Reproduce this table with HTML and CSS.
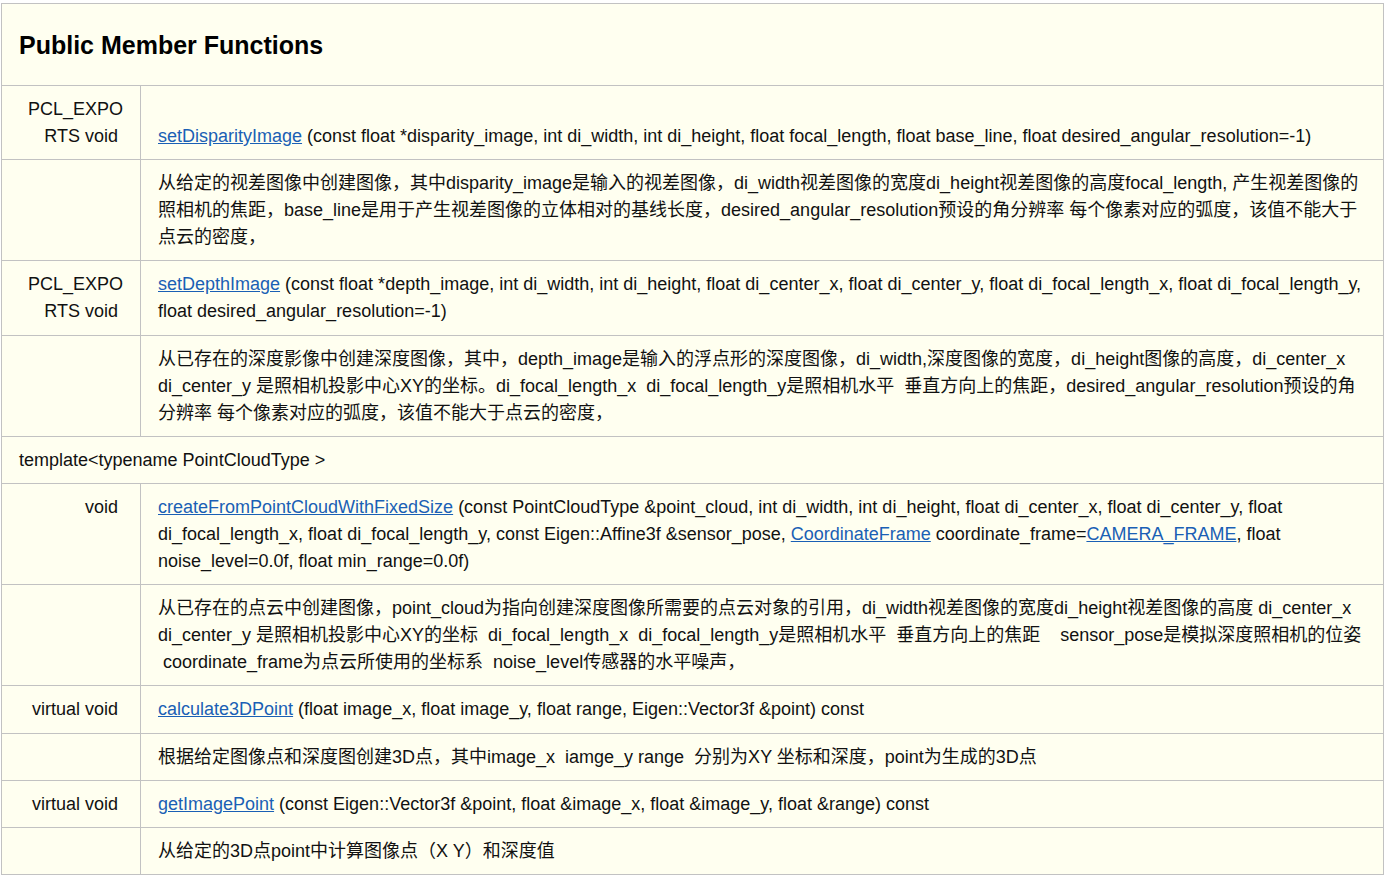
FILE: index.html
```html
<!DOCTYPE html>
<html lang="zh-CN">
<head>
<meta charset="utf-8">
<title>Public Member Functions</title>
<link rel="stylesheet" href="styles.css">
</head>
<body>
<div class="page">
<table class="members">
  <colgroup><col class="col-left"><col class="col-right"></colgroup>
  <tr class="heading">
    <td colspan="2"><h2>Public Member Functions</h2></td>
  </tr>
  <tr>
    <td class="left">PCL_EXPORTS void&nbsp;</td>
    <td class="right bottom"><a href="#">setDisparityImage</a> (const float *disparity_image, int di_width, int di_height, float focal_length, float base_line, float desired_angular_resolution=-1)</td>
  </tr>
  <tr>
    <td class="left"></td>
    <td class="right">从给定的视差图像中创建图像，其中disparity_image是输入的视差图像，di_width视差图像的宽度di_height视差图像的高度focal_length, 产生视差图像的照相机的焦距，base_line是用于产生视差图像的立体相对的基线长度，desired_angular_resolution预设的角分辨率 每个像素对应的弧度，该值不能大于点云的密度，</td>
  </tr>
  <tr>
    <td class="left">PCL_EXPORTS void&nbsp;</td>
    <td class="right"><a href="#">setDepthImage</a> (const float *depth_image, int di_width, int di_height, float di_center_x, float di_center_y, float di_focal_length_x, float di_focal_length_y, float desired_angular_resolution=-1)</td>
  </tr>
  <tr>
    <td class="left"></td>
    <td class="right">从已存在的深度影像中创建深度图像，其中，depth_image是输入的浮点形的深度图像，di_width,深度图像的宽度，di_height图像的高度，di_center_x di_center_y 是照相机投影中心XY的坐标。di_focal_length_x&nbsp; di_focal_length_y是照相机水平&nbsp; 垂直方向上的焦距，desired_angular_resolution预设的角分辨率 每个像素对应的弧度，该值不能大于点云的密度，</td>
  </tr>
  <tr class="template">
    <td colspan="2">template&lt;typename PointCloudType &gt;</td>
  </tr>
  <tr>
    <td class="left">void&nbsp;</td>
    <td class="right"><a href="#">createFromPointCloudWithFixedSize</a> (const PointCloudType &amp;point_cloud, int di_width, int di_height, float di_center_x, float di_center_y, float di_focal_length_x, float di_focal_length_y, const Eigen::Affine3f &amp;sensor_pose, <a href="#">CoordinateFrame</a> coordinate_frame=<a href="#">CAMERA_FRAME</a>, float noise_level=0.0f, float min_range=0.0f)</td>
  </tr>
  <tr>
    <td class="left"></td>
    <td class="right">从已存在的点云中创建图像，point_cloud为指向创建深度图像所需要的点云对象的引用，di_width视差图像的宽度di_height视差图像的高度 di_center_x di_center_y 是照相机投影中心XY的坐标&nbsp; di_focal_length_x&nbsp; di_focal_length_y是照相机水平&nbsp; 垂直方向上的焦距&nbsp;&nbsp;&nbsp; sensor_pose是模拟深度照相机的位姿 &nbsp;coordinate_frame为点云所使用的坐标系&nbsp; noise_level传感器的水平噪声，</td>
  </tr>
  <tr>
    <td class="left">virtual void&nbsp;</td>
    <td class="right"><a href="#">calculate3DPoint</a> (float image_x, float image_y, float range, Eigen::Vector3f &amp;point) const</td>
  </tr>
  <tr>
    <td class="left"></td>
    <td class="right">根据给定图像点和深度图创建3D点，其中image_x&nbsp; iamge_y range&nbsp; 分别为XY 坐标和深度，point为生成的3D点</td>
  </tr>
  <tr>
    <td class="left">virtual void&nbsp;</td>
    <td class="right"><a href="#">getImagePoint</a> (const Eigen::Vector3f &amp;point, float &amp;image_x, float &amp;image_y, float &amp;range) const</td>
  </tr>
  <tr>
    <td class="left"></td>
    <td class="right">从给定的3D点point中计算图像点（X Y）和深度值</td>
  </tr>
</table>
</div>
</body>
</html>
```

FILE: styles.css
```css
html, body {
  margin: 0;
  padding: 0;
  background: #ffffff;
}

.page {
  padding: 3px 0 0 1px;
}

.members {
  width: 1383px;
  border-collapse: collapse;
  table-layout: fixed;
  background: #fffff0;
  font-family: "Liberation Sans", "Noto Sans CJK SC", sans-serif;
  font-size: 18px;
  line-height: 27px;
  color: #111111;
}

.col-left {
  width: 139px;
}

.members td {
  border: 1px solid #c2c2c2;
  padding: 10px 17px 9.2px 17px;
  vertical-align: top;
}

.heading td {
  padding: 23px 17px 21px 17px;
}

.heading h2 {
  margin: 0;
  font-size: 25px;
  line-height: 37px;
  font-weight: bold;
  color: #000000;
}

.left {
  text-align: right;
  word-break: break-all;
}

.right {
  text-align: left;
}

.bottom {
  vertical-align: bottom !important;
}

.members a {
  color: #1a60b5;
  text-decoration: underline;
}
```
